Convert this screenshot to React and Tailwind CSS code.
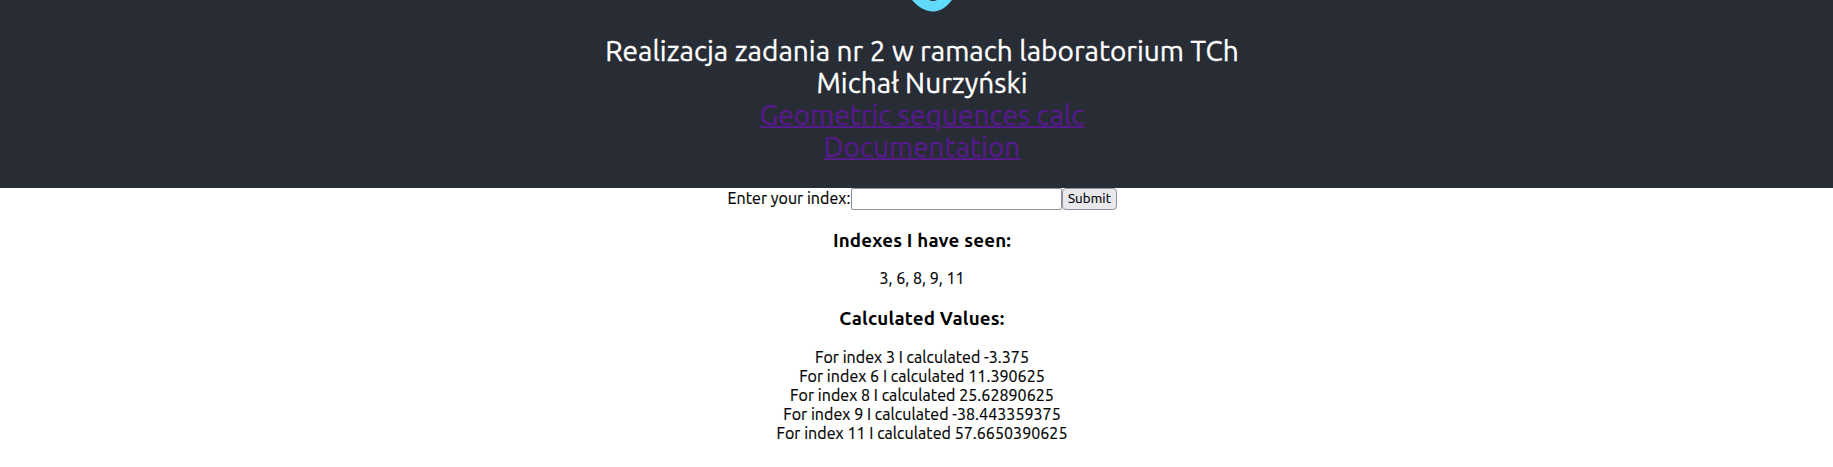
const values = [
  { index: 3, value: "-3.375" },
  { index: 6, value: "11.390625" },
  { index: 8, value: "25.62890625" },
  { index: 9, value: "-38.443359375" },
  { index: 11, value: "57.6650390625" },
];

function Header() {
  return (
    <header className="flex h-[188px] flex-col items-center bg-[#282c34] pl-[11px] text-[28px] leading-8 tracking-[0.03px] text-white [-webkit-text-stroke:0.35px]">
      <svg className="mb-[23px] ml-[22px] h-3 w-12 shrink-0" viewBox="0 0 48 12" aria-hidden="true">
        <path
          d="M3 0C8.500 6.500 16 11.500 24 11.500S38 6.500 43 0H28Q26.500 1 24 1T20 0Z"
          fill="#61dafb"
        />
      </svg>
      <p>Realizacja zadania nr 2 w ramach laboratorium TCh</p>
      <p>Michał Nurzyński</p>
      <a href="#calc" className="text-[#551a8b] underline decoration-2">Geometric sequences calc</a>
      <a href="#docs" className="text-[#551a8b] underline decoration-2">Documentation</a>
    </header>
  );
}

export default function App() {
  return (
    <div className="min-h-[467px] bg-white font-[Ubuntu,'Noto_Sans',sans-serif] text-base leading-[19px] tracking-[0.05px] text-black [-webkit-text-stroke:0.2px]">
      <Header />
      <main className="flex flex-col items-center pl-[11px] text-center">
        <form className="flex h-[22px] items-start" onSubmit={(e) => e.preventDefault()}>
          <label htmlFor="index" className="w-[124px] pt-px whitespace-nowrap">Enter your index:</label>
          <input
            id="index"
            className="h-[22px] w-[211px] rounded-xs border border-[#8f8f9d] bg-white px-0.5 text-[13.333px]"
          />
          <button className="h-[22px] w-[55px] rounded border border-[#8f8f9d] bg-[#e9e9ed] text-center text-[13.333px] leading-5 tracking-[0.1px]">
            Submit
          </button>
        </form>
        <h3 className="mt-5 text-[18.72px] leading-[22px] font-bold tracking-[0.2px] [-webkit-text-stroke:0]">Indexes I have seen:</h3>
        <p className="mt-[17px]">3, 6, 8, 9, 11</p>
        <h3 className="mt-5 text-[18.72px] leading-[22px] font-bold tracking-[0.2px] [-webkit-text-stroke:0]">Calculated Values:</h3>
        <ul className="mt-[18px]">
          {values.map(({ index, value }) => (
            <li key={index}>{`For index ${index} I calculated ${value}`}</li>
          ))}
        </ul>
      </main>
    </div>
  );
}
